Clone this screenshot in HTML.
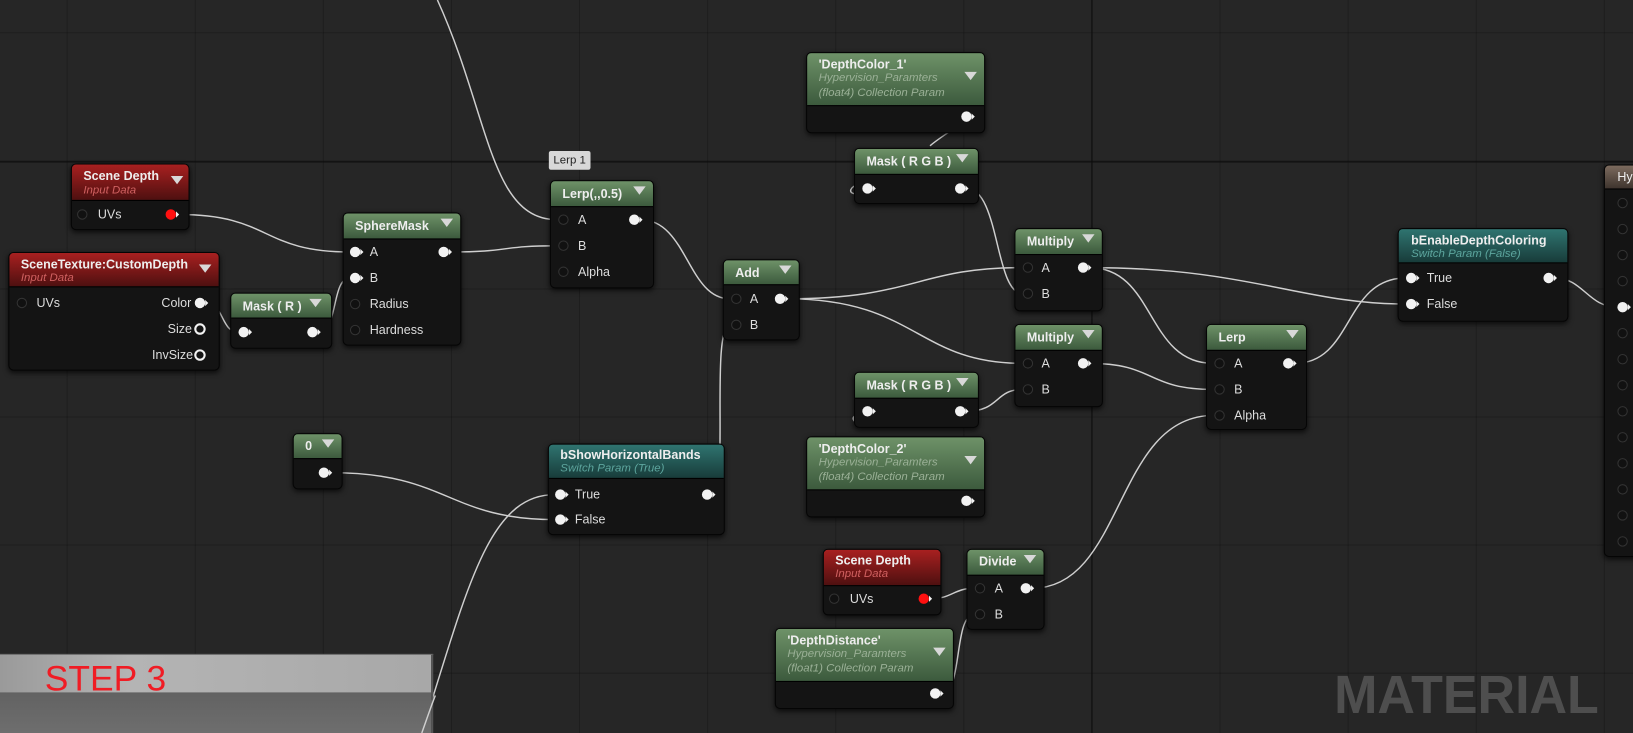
<!DOCTYPE html>
<html><head><meta charset="utf-8"><style>
html,body{margin:0;padding:0;width:1633px;height:733px;overflow:hidden;background:#262626}
#c{position:absolute;left:0;top:0;width:1568px;height:704px;transform-origin:0 0;transform:scale(1.04145,1.0412);font-family:"Liberation Sans",sans-serif;
background-color:#262626;
background-image:linear-gradient(90deg,rgba(0,0,0,.22) 1px,transparent 1px),linear-gradient(0deg,rgba(0,0,0,.22) 1px,transparent 1px);
background-size:123px 123px;background-position:64px 32px}
.n{position:absolute;background:#141414;border:1px solid #050505;border-radius:5px;box-shadow:0 2px 5px rgba(0,0,0,.7);overflow:hidden}
.h{position:absolute;left:0;top:0;right:0;border-bottom:1px solid #000}
.g{background:linear-gradient(180deg,#6e9268,#3c5a3d)}
.r{background:linear-gradient(180deg,#a82020,#4e1010)}
.t{background:linear-gradient(180deg,#2f7470,#183c3a)}
.b{background:linear-gradient(180deg,#7c6b5e,#3e342e)}
.tt{position:absolute;color:#eee;font-size:12px;font-weight:bold;white-space:nowrap}
.st{position:absolute;font-size:11px;font-style:italic;white-space:nowrap}
.tri{position:absolute;width:0;height:0;border-left:6px solid transparent;border-right:6px solid transparent;border-top:8px solid #d8d8d8}
.l{position:absolute;color:#ddd;font-size:12px;white-space:nowrap;transform:translateY(-50%)}
.p{position:absolute;width:10px;height:10px;border-radius:50%;background:#f2f2f2;transform:translate(-50%,-50%)}
.p:after{content:"";position:absolute;left:10px;top:2px;border-top:3px solid transparent;border-bottom:3px solid transparent;border-left:3px solid #f2f2f2}
.q{position:absolute;width:8px;height:8px;border-radius:50%;border:1px solid #333;background:#111;transform:translate(-50%,-50%)}
.o{position:absolute;width:7px;height:7px;border-radius:50%;border:2px solid #f2f2f2;transform:translate(-50%,-50%)}
.rp{background:#ff1010}
svg{position:absolute;left:0;top:0}
</style></head><body><div id="c">
<div style="position:absolute;left:0;top:155px;width:1568px;height:1px;background:#0c0c0c"></div>
<div style="position:absolute;left:1048px;top:0;width:1px;height:704px;background:#0c0c0c"></div>

<svg width="1568" height="704" fill="none" stroke="#cfcfcf" stroke-width="1.4">
<path d="M420,0 C470,110 470,211 535,211"/>
<path d="M172,206 C260,206 250,242 336,242"/>
<path d="M198,291 C215,291 212,319 229,319"/>
<path d="M306,319 C325,319 318,267 336,267"/>
<path d="M433,242 C490,242 480,236 535,236"/>
<path d="M615,211 C660,211 660,287 701,287"/>
<path d="M684,475 C700,475 682,312 701,312"/>
<path d="M318,454 C430,454 430,499 533,499"/>
<path d="M405,704 C450,560 470,475 533,475"/>
<path d="M755,287 C880,287 880,257 982,257"/>
<path d="M755,287 C880,287 880,349 982,349"/>
<path d="M933,112 C915,125 905,130 893,140"/>
<path d="M826,176 C815,180 815,185 820,186"/>
<path d="M928,181 C960,181 955,282 982,282"/>
<path d="M928,395 C960,395 955,374 982,374"/>
<path d="M826,398 C815,400 818,405 830,410"/>
<path d="M1046,257 C1110,257 1100,349 1165,349"/>
<path d="M1046,257 C1200,257 1250,292 1350,292"/>
<path d="M1046,349 C1110,349 1100,374 1165,374"/>
<path d="M1243,349 C1300,349 1290,267 1350,267"/>
<path d="M991,565 C1080,565 1070,399 1165,399"/>
<path d="M893,575 C915,575 915,565 936,565"/>
<path d="M904,666 C925,666 915,590 936,590"/>
<path d="M1493,267 C1520,267 1525,295 1553,295"/>
</svg>

<div class="n" style="left:68px;top:157px;width:112px;height:62px"><div class="h r" style="height:34px"></div></div>
<div class="tt" style="left:80px;top:162px">Scene Depth</div><div class="st" style="left:80px;top:177px;color:#d06060">Input Data</div>
<div class="tri" style="left:164px;top:169px"></div>
<i class="q" style="left:79px;top:206px"></i><div class="l" style="left:94px;top:206px">UVs</div><i class="p rp" style="left:164px;top:206px"></i>

<div class="n" style="left:8px;top:242px;width:201px;height:112px"><div class="h r" style="height:32px"></div></div>
<div class="tt" style="left:20px;top:247px">SceneTexture:CustomDepth</div><div class="st" style="left:20px;top:261px;color:#d06060">Input Data</div>
<div class="tri" style="left:191px;top:254px"></div>
<i class="q" style="left:21px;top:291px"></i><div class="l" style="left:35px;top:291px">UVs</div>
<div class="l" style="left:155px;top:291px">Color</div><i class="p" style="left:192px;top:291px"></i>
<div class="l" style="left:161px;top:316px">Size</div><i class="o" style="left:192px;top:316px"></i>
<div class="l" style="left:146px;top:341px">InvSize</div><i class="o" style="left:192px;top:341px"></i>

<div class="n" style="left:221px;top:281px;width:96px;height:52px"><div class="h g" style="height:23px"></div></div>
<div class="tt" style="left:233px;top:287px">Mask ( R )</div><div class="tri" style="left:297px;top:287px"></div>
<i class="p" style="left:234px;top:319px"></i><i class="p" style="left:300px;top:319px"></i>

<div class="n" style="left:329px;top:204px;width:112px;height:126px"><div class="h g" style="height:24px"></div></div>
<div class="tt" style="left:341px;top:210px">SphereMask</div><div class="tri" style="left:423px;top:210px"></div>
<i class="p" style="left:341px;top:242px"></i><div class="l" style="left:355px;top:242px">A</div>
<i class="p" style="left:341px;top:267px"></i><div class="l" style="left:355px;top:267px">B</div>
<i class="q" style="left:341px;top:292px"></i><div class="l" style="left:355px;top:292px">Radius</div>
<i class="q" style="left:341px;top:317px"></i><div class="l" style="left:355px;top:317px">Hardness</div>
<i class="p" style="left:426px;top:242px"></i>

<div style="position:absolute;left:527px;top:145px;width:40px;height:18px;background:#d8d8d8;border-radius:2px;color:#222;font-size:11px;line-height:18px;text-align:center">Lerp 1</div>
<div class="n" style="left:528px;top:173px;width:98px;height:102px"><div class="h g" style="height:24px"></div></div>
<div class="tt" style="left:540px;top:179px">Lerp(,,0.5)</div><div class="tri" style="left:608px;top:179px"></div>
<i class="q" style="left:541px;top:211px"></i><div class="l" style="left:555px;top:211px">A</div>
<i class="q" style="left:541px;top:236px"></i><div class="l" style="left:555px;top:236px">B</div>
<i class="q" style="left:541px;top:261px"></i><div class="l" style="left:555px;top:261px">Alpha</div>
<i class="p" style="left:609px;top:211px"></i>

<div class="n" style="left:694px;top:249px;width:72px;height:76px"><div class="h g" style="height:23px"></div></div>
<div class="tt" style="left:706px;top:255px">Add</div><div class="tri" style="left:748px;top:255px"></div>
<i class="q" style="left:707px;top:287px"></i><div class="l" style="left:720px;top:287px">A</div>
<i class="q" style="left:707px;top:312px"></i><div class="l" style="left:720px;top:312px">B</div>
<i class="p" style="left:749px;top:287px"></i>

<div class="n" style="left:774px;top:50px;width:170px;height:76px"><div class="h g" style="height:50px"></div></div>
<div class="tt" style="left:786px;top:55px">'DepthColor_1'</div>
<div class="st" style="left:786px;top:68px;color:#9ab096;line-height:14px">Hypervision_Paramters<br>(float4) Collection Param</div>
<div class="tri" style="left:926px;top:69px"></div>
<i class="p" style="left:928px;top:112px"></i>

<div class="n" style="left:820px;top:142px;width:118px;height:52px"><div class="h g" style="height:24px"></div></div>
<div class="tt" style="left:832px;top:148px">Mask ( R G B )</div><div class="tri" style="left:918px;top:148px"></div>
<i class="p" style="left:833px;top:181px"></i><i class="p" style="left:922px;top:181px"></i>

<div class="n" style="left:974px;top:219px;width:83px;height:78px"><div class="h g" style="height:24px"></div></div>
<div class="tt" style="left:986px;top:225px">Multiply</div><div class="tri" style="left:1039px;top:225px"></div>
<i class="q" style="left:987px;top:257px"></i><div class="l" style="left:1000px;top:257px">A</div>
<i class="q" style="left:987px;top:282px"></i><div class="l" style="left:1000px;top:282px">B</div>
<i class="p" style="left:1040px;top:257px"></i>

<div class="n" style="left:974px;top:311px;width:83px;height:78px"><div class="h g" style="height:24px"></div></div>
<div class="tt" style="left:986px;top:317px">Multiply</div><div class="tri" style="left:1039px;top:317px"></div>
<i class="q" style="left:987px;top:349px"></i><div class="l" style="left:1000px;top:349px">A</div>
<i class="q" style="left:987px;top:374px"></i><div class="l" style="left:1000px;top:374px">B</div>
<i class="p" style="left:1040px;top:349px"></i>

<div class="n" style="left:820px;top:357px;width:118px;height:52px"><div class="h g" style="height:24px"></div></div>
<div class="tt" style="left:832px;top:363px">Mask ( R G B )</div><div class="tri" style="left:918px;top:363px"></div>
<i class="p" style="left:833px;top:395px"></i><i class="p" style="left:922px;top:395px"></i>

<div class="n" style="left:774px;top:419px;width:170px;height:76px"><div class="h g" style="height:50px"></div></div>
<div class="tt" style="left:786px;top:424px">'DepthColor_2'</div>
<div class="st" style="left:786px;top:437px;color:#9ab096;line-height:14px">Hypervision_Paramters<br>(float4) Collection Param</div>
<div class="tri" style="left:926px;top:438px"></div>
<i class="p" style="left:928px;top:481px"></i>

<div class="n" style="left:1158px;top:311px;width:95px;height:100px"><div class="h g" style="height:24px"></div></div>
<div class="tt" style="left:1170px;top:317px">Lerp</div><div class="tri" style="left:1235px;top:317px"></div>
<i class="q" style="left:1171px;top:349px"></i><div class="l" style="left:1185px;top:349px">A</div>
<i class="q" style="left:1171px;top:374px"></i><div class="l" style="left:1185px;top:374px">B</div>
<i class="q" style="left:1171px;top:399px"></i><div class="l" style="left:1185px;top:399px">Alpha</div>
<i class="p" style="left:1237px;top:349px"></i>

<div class="n" style="left:1342px;top:219px;width:162px;height:88px"><div class="h t" style="height:32px"></div></div>
<div class="tt" style="left:1355px;top:224px">bEnableDepthColoring</div><div class="st" style="left:1355px;top:238px;color:#5da69e">Switch Param (False)</div>
<i class="p" style="left:1355px;top:267px"></i><div class="l" style="left:1370px;top:267px">True</div>
<i class="p" style="left:1355px;top:292px"></i><div class="l" style="left:1370px;top:292px">False</div>
<i class="p" style="left:1487px;top:267px"></i>

<div class="n" style="left:1540px;top:158px;width:40px;height:375px"><div class="h b" style="height:22px"></div></div>
<div class="tt" style="left:1553px;top:163px;font-weight:normal">Hy</div>
<i class="q" style="left:1558px;top:195px"></i><i class="q" style="left:1558px;top:220px"></i><i class="q" style="left:1558px;top:245px"></i><i class="q" style="left:1558px;top:270px"></i>
<i class="p" style="left:1558px;top:295px"></i>
<i class="q" style="left:1558px;top:320px"></i><i class="q" style="left:1558px;top:345px"></i><i class="q" style="left:1558px;top:370px"></i><i class="q" style="left:1558px;top:395px"></i><i class="q" style="left:1558px;top:420px"></i><i class="q" style="left:1558px;top:445px"></i><i class="q" style="left:1558px;top:470px"></i><i class="q" style="left:1558px;top:495px"></i><i class="q" style="left:1558px;top:520px"></i>

<div class="n" style="left:281px;top:416px;width:46px;height:52px"><div class="h g" style="height:23px"></div></div>
<div class="tt" style="left:293px;top:421px">0</div><div class="tri" style="left:309px;top:422px"></div>
<i class="p" style="left:311px;top:454px"></i>

<div class="n" style="left:526px;top:426px;width:168px;height:86px"><div class="h t" style="height:32px"></div></div>
<div class="tt" style="left:538px;top:430px">bShowHorizontalBands</div><div class="st" style="left:538px;top:444px;color:#5da69e">Switch Param (True)</div>
<i class="p" style="left:538px;top:475px"></i><div class="l" style="left:552px;top:475px">True</div>
<i class="p" style="left:538px;top:499px"></i><div class="l" style="left:552px;top:499px">False</div>
<i class="p" style="left:679px;top:475px"></i>

<div class="n" style="left:790px;top:527px;width:112px;height:62px"><div class="h r" style="height:34px"></div></div>
<div class="tt" style="left:802px;top:531px">Scene Depth</div><div class="st" style="left:802px;top:545px;color:#d06060">Input Data</div>
<i class="q" style="left:801px;top:575px"></i><div class="l" style="left:816px;top:575px">UVs</div><i class="p rp" style="left:887px;top:575px"></i>

<div class="n" style="left:928px;top:527px;width:73px;height:76px"><div class="h g" style="height:24px"></div></div>
<div class="tt" style="left:940px;top:532px">Divide</div><div class="tri" style="left:983px;top:533px"></div>
<i class="q" style="left:941px;top:565px"></i><div class="l" style="left:955px;top:565px">A</div>
<i class="q" style="left:941px;top:590px"></i><div class="l" style="left:955px;top:590px">B</div>
<i class="p" style="left:985px;top:565px"></i>

<div class="n" style="left:744px;top:603px;width:170px;height:76px"><div class="h g" style="height:50px"></div></div>
<div class="tt" style="left:756px;top:608px">'DepthDistance'</div>
<div class="st" style="left:756px;top:621px;color:#9ab096;line-height:14px">Hypervision_Paramters<br>(float1) Collection Param</div>
<div class="tri" style="left:896px;top:622px"></div>
<i class="p" style="left:898px;top:666px"></i>

<div style="position:absolute;left:0;top:628px;width:414px;height:37px;background:linear-gradient(90deg,#9a9a9a,#b4b4b4 30%,#a8a8a8);border-top:1px solid #777;border-right:2px solid #555"></div>
<div style="position:absolute;left:0;top:665px;width:414px;height:39px;background:linear-gradient(180deg,#626262,#6e6e6e);border-right:2px solid #555"></div>
<div style="position:absolute;left:43px;top:632px;color:#f01c24;font-size:34px;line-height:40px">STEP 3</div>
<svg width="1568" height="704" fill="none" stroke="#cfcfcf" stroke-width="1.4"><path d="M405,704 C410,690 414,678 418,668"/></svg>

<div style="position:absolute;left:1281px;top:637px;color:#4e4e4e;font-size:52px;font-weight:bold;line-height:62px;transform-origin:0 0;transform:scaleX(0.96)">MATERIAL</div>
</div></body></html>
